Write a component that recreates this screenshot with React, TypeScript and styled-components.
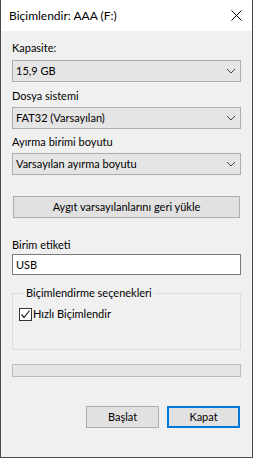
import React from 'react';
import styled, { createGlobalStyle } from 'styled-components';

const GlobalStyle = createGlobalStyle`
  html, body {
    margin: 0;
    padding: 0;
    background: #f0f0f0;
  }
  body {
    font-family: Lato, "Noto Sans", sans-serif;
    font-size: 11px;
    color: #000;
  }
`;

const Window = styled.div`
  width: 253px;
  height: 458px;
  box-sizing: border-box;
  border: 1px solid #4a4a4a;
  border-top: none;
  background: #f0f0f0;
  display: flex;
  flex-direction: column;
`;

const TitleBar = styled.div`
  height: 31px;
  flex-shrink: 0;
  background: #fff;
  display: flex;
  align-items: center;
  justify-content: space-between;
  padding: 0 10px 0 8px;
`;

const Title = styled.span`
  font-size: 12px;
  line-height: 16px;
`;

const CloseButton = styled.div`
  width: 12px;
  height: 12px;
  display: flex;
  align-items: center;
  justify-content: center;
`;

const Body = styled.div`
  flex: 1;
  padding: 9px 11px 0 11px;
  display: flex;
  flex-direction: column;
`;

const Label = styled.div<{ $top?: number; $bottom?: number }>`
  line-height: 16px;
  margin-top: ${(p) => p.$top ?? 0}px;
  margin-bottom: ${(p) => p.$bottom ?? 4}px;
`;

const Combo = styled.div`
  height: 22px;
  box-sizing: border-box;
  border: 1px solid #adadad;
  background: #e5e5e5;
  display: flex;
  align-items: center;
  justify-content: space-between;
  padding: 0 4px 0 3px;
  line-height: 16px;
`;

const Chevron = () => (
  <svg width="10" height="6" viewBox="0 0 10 6">
    <path d="M1 1 L5 5 L9 1" fill="none" stroke="#444" strokeWidth="1" />
  </svg>
);

const Button = styled.div<{ $primary?: boolean }>`
  height: 22px;
  box-sizing: border-box;
  border: ${(p) => (p.$primary ? '2px solid #0078d7' : '1px solid #adadad')};
  background: #e1e1e1;
  display: flex;
  align-items: center;
  justify-content: center;
  line-height: 16px;
`;

const WideButton = styled(Button)`
  margin: 21px 1px 0 1px;
`;

const TextBox = styled.div`
  height: 21px;
  box-sizing: border-box;
  border: 1px solid #7a7a7a;
  background: #fff;
  display: flex;
  align-items: center;
  padding: 0 3px;
  line-height: 16px;
`;

const Group = styled.fieldset`
  margin: 10px 0 0 0;
  padding: 0 6px 27px 6px;
  border: 1px solid #dcdcdc;
  min-width: 0;
`;

const Legend = styled.legend`
  padding: 0 2px;
  margin-left: 5px;
  line-height: 16px;
`;

const CheckRow = styled.label`
  display: flex;
  align-items: center;
  gap: 1px;
  margin-top: 5px;
  line-height: 16px;
`;

const CheckBox = styled.span`
  width: 13px;
  height: 13px;
  box-sizing: border-box;
  border: 1px solid #333;
  background: #fff;
  display: flex;
  align-items: center;
  justify-content: center;
`;

const Progress = styled.div`
  margin-top: 14px;
  height: 13px;
  box-sizing: border-box;
  border: 1px solid #bcbcbc;
  background: #e6e6e6;
`;

const ButtonRow = styled.div`
  margin: 29px 1px 0 0;
  display: flex;
  justify-content: flex-end;
  gap: 8px;
`;

const ActionButton = styled(Button)`
  width: 73px;
`;

export default function App() {
  return (
    <>
      <GlobalStyle />
      <Window>
        <TitleBar>
          <Title>Biçimlendir: AAA (F:)</Title>
          <CloseButton>
            <svg width="11" height="11" viewBox="0 0 11 11">
              <path d="M0.5 0.5 L10.5 10.5 M10.5 0.5 L0.5 10.5" stroke="#000" strokeWidth="1" />
            </svg>
          </CloseButton>
        </TitleBar>
        <Body>
          <Label>Kapasite:</Label>
          <Combo>
            <span>15,9 GB</span>
            <Chevron />
          </Combo>
          <Label $top={6} $bottom={3}>Dosya sistemi</Label>
          <Combo>
            <span>FAT32 (Varsayılan)</span>
            <Chevron />
          </Combo>
          <Label $top={5} $bottom={3}>Ayırma birimi boyutu</Label>
          <Combo>
            <span>Varsayılan ayırma boyutu</span>
            <Chevron />
          </Combo>
          <WideButton>Aygıt varsayılanlarını geri yükle</WideButton>
          <Label $top={19} $bottom={1}>Birim etiketi</Label>
          <TextBox>USB</TextBox>
          <Group>
            <Legend>Biçimlendirme seçenekleri</Legend>
            <CheckRow>
              <CheckBox>
                <svg width="11" height="11" viewBox="0 0 11 11">
                  <path d="M1.5 5.5 L4 8.5 L9.5 1.5" fill="none" stroke="#222" strokeWidth="1.2" />
                </svg>
              </CheckBox>
              <span>Hızlı Biçimlendir</span>
            </CheckRow>
          </Group>
          <Progress />
          <ButtonRow>
            <ActionButton>Başlat</ActionButton>
            <ActionButton $primary>Kapat</ActionButton>
          </ButtonRow>
        </Body>
      </Window>
    </>
  );
}
